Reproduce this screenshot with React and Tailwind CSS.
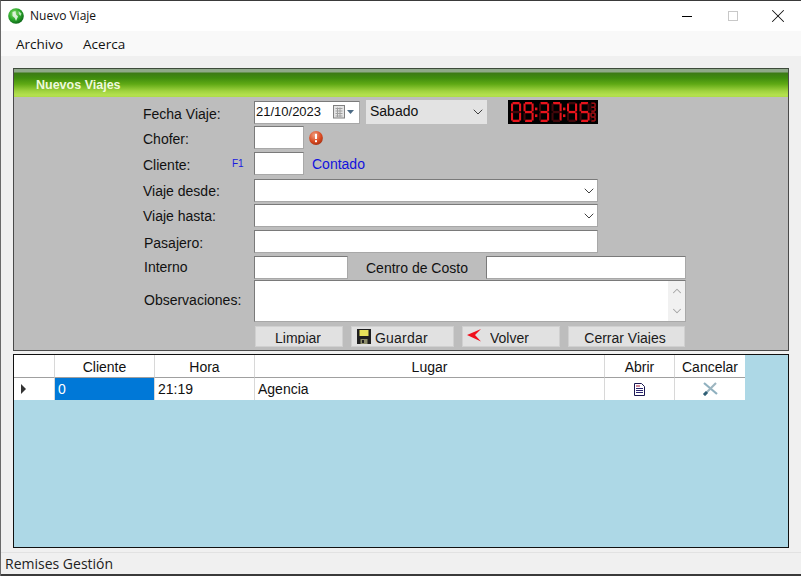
import React from "react";
import { ChevronDown, ChevronUp, X } from "lucide-react";

const SEG = {
  a: [1.4, 0, 6.4, 1.9], b: [7.3, 1.2, 1.9, 6.4], c: [7.3, 8.6, 1.9, 6.4], d: [1.4, 14.3, 6.4, 1.9],
  e: [0, 8.6, 1.9, 6.4], f: [0, 1.2, 1.9, 6.4], g: [1.4, 7.2, 6.4, 1.9],
};
const ON = { 0: "abcdef", 1: "bc", 2: "abdeg", 3: "abcdg", 4: "bcfg", 5: "acdfg", 6: "acdefg", 7: "abc", 8: "abcdefg", 9: "abcdfg" };

function Digit({ d, x }) {
  return (
    <g transform={`translate(${x} 0) scale(1.1 1)`}>
      {Object.entries(SEG).map(([k, [sx, sy, w, h]]) => (
        <rect key={k} x={sx} y={sy} width={w} height={h} fill={ON[d].includes(k) ? "#e8141c" : "#42060a"} />
      ))}
    </g>
  );
}

function Clock() {
  return (
    <div role="img" aria-label="09:37:45" className="w-[90px] h-[24px] bg-black flex items-center justify-center">
      <svg width="86" height="20" viewBox="0 0 86 16.2" preserveAspectRatio="none">
        <Digit d={0} x={1} />
        <Digit d={9} x={13.5} />
        <rect x="25" y="4.5" width="2.4" height="2.2" fill="#e8141c" />
        <rect x="25" y="10" width="2.4" height="2.2" fill="#e8141c" />
        <Digit d={3} x={29} />
        <Digit d={7} x={41.5} />
        <rect x="53" y="4.5" width="2.4" height="2.2" fill="#e8141c" />
        <rect x="53" y="10" width="2.4" height="2.2" fill="#e8141c" />
        <Digit d={4} x={57} />
        <Digit d={5} x={69.5} />
        <g transform="translate(80.5 0.5) scale(0.5 0.45)"><Digit d={3} x={0} /></g>
        <g transform="translate(80.5 8.5) scale(0.5 0.45)"><Digit d={9} x={0} /></g>
      </svg>
    </div>
  );
}

function Logo() {
  return (
    <svg width="16" height="16" viewBox="0 0 16 16">
      <defs>
        <radialGradient id="lg" cx="0.4" cy="0.35" r="0.7">
          <stop offset="0" stopColor="#8fe06f" />
          <stop offset="0.55" stopColor="#2aa82a" />
          <stop offset="1" stopColor="#0b5f18" />
        </radialGradient>
      </defs>
      <circle cx="8" cy="8" r="7.8" fill="url(#lg)" />
      <path d="M4.5 4 L7.5 3 L8 6.5 L10 8.5 L8 13 L6.8 10 L4.5 8 Z" fill="#e8f5e8" opacity="0.9" />
      <path d="M10.5 3 L13.5 5.5 L12.5 8 L10.8 6 Z" fill="#e8f5e8" opacity="0.75" />
    </svg>
  );
}

function Alert() {
  return (
    <svg width="14" height="14" viewBox="0 0 14 14">
      <defs>
        <radialGradient id="al" cx="0.4" cy="0.3" r="0.8">
          <stop offset="0" stopColor="#f0a080" />
          <stop offset="0.6" stopColor="#d8481f" />
          <stop offset="1" stopColor="#9a2c10" />
        </radialGradient>
      </defs>
      <circle cx="7" cy="7" r="6.9" fill="url(#al)" />
      <rect x="6" y="2.8" width="2" height="5.2" fill="#fff" />
      <rect x="6" y="9.2" width="2" height="2" fill="#fff" />
    </svg>
  );
}

function CalendarIcon() {
  return (
    <svg width="26" height="14" viewBox="0 0 26 14">
      <rect x="0.5" y="0.5" width="11" height="12.5" fill="#e4e4e4" stroke="#808080" />
      <path d="M2.5 3.5 H9.5 M2.5 6 H9.5 M2.5 8.5 H9.5 M2.5 11 H9.5 M4.5 2.5 V12 M7 2.5 V12" stroke="#a0a0a0" strokeWidth="1" />
      <path d="M14 5 H21 L17.5 9 Z" fill="#4d6b85" />
    </svg>
  );
}

function Floppy() {
  return (
    <svg width="14" height="15" viewBox="0 0 14 15">
      <rect x="0" y="0" width="14" height="15" fill="#1f1f1f" />
      <rect x="2.5" y="1" width="9" height="6" fill="#e8e25a" />
      <rect x="3.5" y="10" width="7" height="5" fill="#8d8d6a" />
      <rect x="5" y="11" width="2" height="3" fill="#1f1f1f" />
    </svg>
  );
}

function Back() {
  return (
    <svg width="15" height="13" viewBox="0 0 15 13">
      <path d="M0 6 L14 0 L8 6 L14 12.5 Z" fill="#f0101c" />
    </svg>
  );
}

function DocIcon() {
  return (
    <svg width="11" height="13" viewBox="0 0 11 13">
      <path d="M0.5 0.5 H7.5 L10.5 3.5 V12.5 H0.5 Z" fill="#fff" stroke="#1a1650" />
      <path d="M2 5.5 H9 M2 7.5 H9 M2 9.5 H9" stroke="#2a2470" />
      <path d="M2 3 H6" stroke="#a01030" />
    </svg>
  );
}

function CancelIcon() {
  return (
    <svg width="16" height="14" viewBox="0 0 16 14">
      <path d="M2 1 L15 12" stroke="#8fb0bf" strokeWidth="2.2" />
      <path d="M14 1 L2 13" stroke="#9db5c0" strokeWidth="2.2" />
      <path d="M2 13 L5 10" stroke="#2f5f75" strokeWidth="3" />
    </svg>
  );
}

const field = "h-[23px] bg-white border border-[#7a7a7a] border-b-[#a8a8a8] border-r-[#a8a8a8]";

function Label({ children, className = "mt-[4px]" }) {
  return <span className={`w-[111px] shrink-0 text-[14px] text-[#111] ${className}`}>{children}</span>;
}

function ComboField() {
  return (
    <div className={`${field} w-[344px] flex items-center justify-end`}>
      <ChevronDown size={16} strokeWidth={1.4} className="text-[#333]" />
    </div>
  );
}

function Btn({ children, className = "" }) {
  return (
    <div className={`h-[21px] bg-[#e1e1e1] border border-[#d0d0d0] overflow-hidden flex items-start text-[14px] leading-[17px] pt-[3px] text-[#1a1a1a] ${className}`}>
      {children}
    </div>
  );
}

function BtnText({ children, className = "" }) {
  return <span className={`block h-[14px] overflow-hidden ${className}`}>{children}</span>;
}

function HeaderCell({ children, className = "" }) {
  return (
    <div className={`h-[23px] pt-[2px] flex items-center justify-center border-r border-[#d8d8d8] border-b border-b-[#a0a0a0] ${className}`}>
      {children}
    </div>
  );
}

function BodyCell({ children, className = "" }) {
  return <div className={`h-[22px] flex items-center border-r border-[#d8d8d8] ${className}`}>{children}</div>;
}

export default function App() {
  const grid = "grid grid-cols-[41px_100px_100px_350px_70px_70px]";
  return (
    <div className="w-[801px] h-[576px] overflow-hidden flex flex-col bg-[#f0f0f0] border-t border-t-[#3a3a3a] border-l border-l-[#6a6a6a] font-['Liberation_Sans',sans-serif]">
      <div className="h-[30px] shrink-0 bg-white flex items-center pl-[7px] font-['Open_Sans',sans-serif]">
        <Logo />
        <span className="ml-[6px] text-[12px] text-[#111]">Nuevo Viaje</span>
        <div className="ml-auto flex items-center text-[#111]">
          <div className="w-[46px] flex justify-center"><div className="w-[10px] h-px bg-black" /></div>
          <div className="w-[45px] flex justify-center"><div className="w-[10px] h-[10px] border border-[#c8c8c8]" /></div>
          <div className="w-[46px] flex justify-center"><X size={22} strokeWidth={1.1} /></div>
        </div>
      </div>

      <div className="h-[25px] shrink-0 bg-[#f9f9f9] flex items-center pl-[15px] pt-px gap-[20px] text-[13.5px] text-[#111] font-['Open_Sans',sans-serif]">
        <span>Archivo</span>
        <span>Acerca</span>
      </div>

      <div className="h-[496px] shrink-0 pt-[12px] px-[12px] flex flex-col">
        <section className="h-[283px] shrink-0 w-[776px] bg-[#bdbdbd] border border-[#4a4a4a] border-t-[#3d4a3a] flex flex-col">
          <div className="h-[28px] shrink-0 bg-[linear-gradient(#8fa98a_0,#8fa98a_3px,#3b7a16_4px,#3f8d0e_9px,#5fa914_15px,#9fd23f_22px,#b4e04f_26px,#aedb47_28px)] flex items-center pl-[22px] pt-[4px]">
            <span className="text-[12.5px] font-bold text-[#eef9dc]">Nuevos Viajes</span>
          </div>

          <div className="pl-[129px] pt-[3px] flex flex-col">
            <div className="flex items-center h-[24px]">
              <Label>Fecha Viaje:</Label>
              <div className={`${field} w-[106px] flex items-center pl-[1px] justify-between text-[13px] text-[#111]`}>
                <span className="-mt-[1px]">21/10/2023</span>
                <CalendarIcon />
              </div>
              <div className="ml-[6px] w-[121px] h-[24px] bg-[#e3e3e3] flex items-center justify-between pl-[4px] pr-[1px] text-[14px] text-[#111]">
                <span className="-mt-[2px]">Sabado</span>
                <ChevronDown size={16} strokeWidth={1.4} className="text-[#333]" />
              </div>
              <div className="ml-[21px]"><Clock /></div>
            </div>

            <div className="flex items-center h-[23px] mt-[2px]">
              <Label>Chofer:</Label>
              <div className={`${field} w-[50px]`} />
              <div className="ml-[5px]"><Alert /></div>
            </div>

            <div className="flex items-center h-[23px] mt-[3px]">
              <Label>Cliente:</Label>
              <span className="-ml-[22px] w-[22px] text-[10px] text-[#1a1ae0] -mt-[1px]">F1</span>
              <div className={`${field} w-[50px]`} />
              <span className="ml-[8px] mt-[2px] text-[14px] text-[#1212dd]">Contado</span>
            </div>

            <div className="flex items-center h-[23px] mt-[4px]">
              <Label className="mt-[2px]">Viaje desde:</Label>
              <ComboField />
            </div>

            <div className="flex items-center h-[23px] mt-[2px]">
              <Label className="mt-[2px]">Viaje hasta:</Label>
              <ComboField />
            </div>

            <div className="flex items-center h-[23px] mt-[3px]">
              <Label className="pl-[1px] mt-[4px]">Pasajero:</Label>
              <div className={`${field} w-[344px]`} />
            </div>

            <div className="flex items-center h-[23px] mt-[3px]">
              <Label className="pl-[1px]">Interno</Label>
              <div className={`${field} w-[94px]`} />
              <span className="ml-[18px] mt-[2px] w-[120px] text-[14px] text-[#111]">Centro de Costo</span>
              <div className={`${field} w-[200px]`} />
            </div>

            <div className="flex h-[42px] mt-[1px]">
              <Label className="pl-[1px] pt-[10px]">Observaciones:</Label>
              <div className="w-[432px] h-[42px] bg-white border border-[#7a7a7a] border-b-[#a8a8a8] border-r-[#a8a8a8] flex justify-end">
                <div className="w-[17px] bg-[#f1f1f1] flex flex-col items-center justify-between py-[3px] text-[#a4a4a4]">
                  <ChevronUp size={14} strokeWidth={1.8} />
                  <ChevronDown size={14} strokeWidth={1.8} />
                </div>
              </div>
            </div>

            <div className="flex mt-[4px] ml-[112px]">
              <Btn className="w-[88px] justify-center"><BtnText className="-ml-[2px]">Limpiar</BtnText></Btn>
              <Btn className="ml-[8px] w-[103px] pl-[5px] gap-[4px] !pt-[2px]"><Floppy /><BtnText className="pt-[1px] tracking-[0.2px]">Guardar</BtnText></Btn>
              <Btn className="ml-[8px] w-[98px] pl-[4px] gap-[8px] !pt-[2px]"><Back /><BtnText className="pt-[1px]">Volver</BtnText></Btn>
              <Btn className="ml-[8px] w-[117px] justify-center"><BtnText className="-ml-[3px]">Cerrar Viajes</BtnText></Btn>
            </div>
          </div>
        </section>

        <section className="mt-[3px] h-[194px] shrink-0 w-[776px] bg-[#add8e6] border border-[#111] text-[14px] text-[#111]">
          <div className={`${grid} w-[731px] bg-white`}>
            <HeaderCell />
            <HeaderCell>Cliente</HeaderCell>
            <HeaderCell>Hora</HeaderCell>
            <HeaderCell>Lugar</HeaderCell>
            <HeaderCell>Abrir</HeaderCell>
            <HeaderCell className="border-r-0">Cancelar</HeaderCell>

            <BodyCell className="pl-[7px]">
              <span className="w-0 h-0 border-y-[5px] border-y-transparent border-l-[5px] border-l-[#333]" />
            </BodyCell>
            <BodyCell className="bg-[#0078d7] text-white pl-[3px]">0</BodyCell>
            <BodyCell className="pl-[3px]">21:19</BodyCell>
            <BodyCell className="pl-[3px]">Agencia</BodyCell>
            <BodyCell className="justify-center"><DocIcon /></BodyCell>
            <BodyCell className="justify-center border-r-0"><CancelIcon /></BodyCell>
          </div>
        </section>
      </div>

      <div className="h-[22px] shrink-0 border-t border-t-[#e2e2e2] pl-[4px] flex items-center text-[14px] text-[#222] font-['Open_Sans',sans-serif]">
        Remises Gestión
      </div>
      <div className="h-[2px] shrink-0 bg-[#3a3a3a]" />
    </div>
  );
}
